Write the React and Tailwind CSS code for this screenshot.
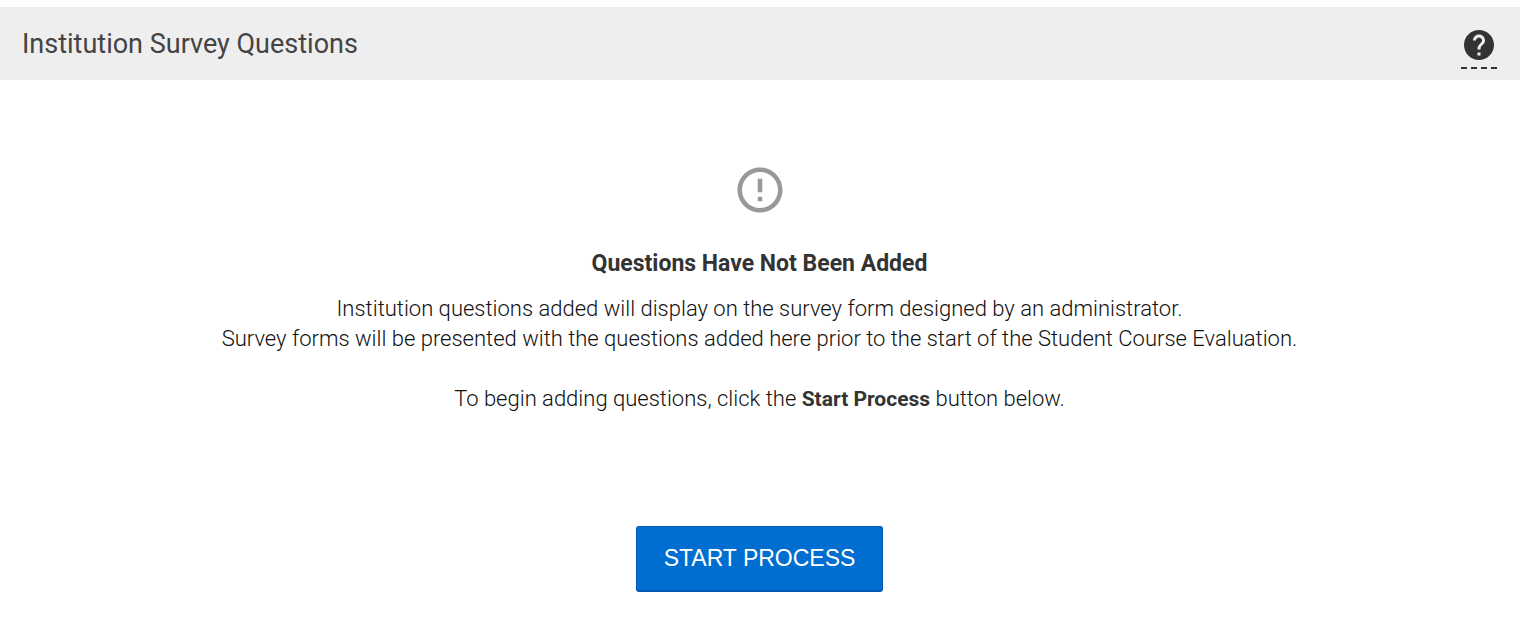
import { MdErrorOutline, MdHelp } from 'react-icons/md';

export default function App() {
  return (
    <div className="mr-[5px] pt-[7px] font-['Roboto',sans-serif] text-[#333]">
      <header className="flex h-[73px] items-center justify-between bg-[#eee] pl-[22px] pr-[23px]">
        <h1 className="text-[27px] leading-8 text-[#444]">Institution Survey Questions</h1>
        <button
          type="button"
          aria-label="Help"
          className="mt-2 flex w-9 justify-center border-b-2 border-dashed border-[#333] pb-1"
        >
          <MdHelp size={36} />
        </button>
      </header>

      <main className="flex flex-col items-center pt-[83px] pr-px text-center">
        <MdErrorOutline size={54} className="text-[#999]" />
        <h2 className="mt-[33px] text-[23px] font-bold leading-7">Questions Have Not Been Added</h2>
        <p className="mt-4 text-[22px] font-light leading-[30px] text-[#111]">
          Institution questions added will display on the survey form designed by an administrator.
          <br />
          Survey forms will be presented with the questions added here prior to the start of the Student Course Evaluation.
        </p>
        <p className="mt-[30px] text-[22px] font-light leading-[30px] text-[#111]">
          To begin adding questions, click the{' '}
          <strong className="text-[21px] font-bold text-[#333]">Start Process</strong> button below.
        </p>
        <button
          type="button"
          className="mt-28 h-[66px] rounded-[3px] border border-b-2 border-[#0059b3] bg-[#006dd1] px-[27px] font-['Liberation_Sans',sans-serif] text-[23px] text-white"
        >
          START PROCESS
        </button>
      </main>
    </div>
  );
}
